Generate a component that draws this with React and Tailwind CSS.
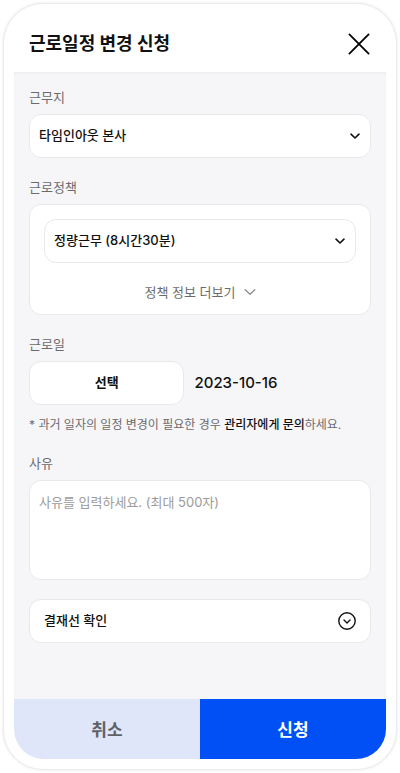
import { useState } from 'react'

const boxClass = 'rounded-xl border border-[#e9e9ec] bg-white'

function ChevronIcon({ className }) {
  return (
    <svg viewBox="0 0 12 12" fill="none" className={className} aria-hidden="true">
      <path
        d="M2 4.2 6 8l4-3.8"
        stroke="currentColor"
        strokeWidth="1.6"
        strokeLinecap="round"
        strokeLinejoin="round"
      />
    </svg>
  )
}

function Label({ htmlFor, children }) {
  return (
    <label
      htmlFor={htmlFor}
      className="mb-[7px] block text-[13px] leading-5 text-[#6b6b6e]"
    >
      {children}
    </label>
  )
}

function SelectBox({ id, options }) {
  return (
    <div className="relative">
      <select
        id={id}
        className={`h-11 w-full appearance-none pr-8 pl-[9px] text-[13px] font-medium text-[#111] outline-none ${boxClass}`}
      >
        {options.map((option) => (
          <option key={option}>{option}</option>
        ))}
      </select>
      <div className="pointer-events-none absolute inset-y-0 right-[10px] flex items-center">
        <ChevronIcon className="size-3" />
      </div>
    </div>
  )
}

function App() {
  const [reason, setReason] = useState('')

  return (
    <div className="flex min-h-screen bg-white p-[3px] font-['Inter','Noto_Sans_CJK_KR',sans-serif] text-[#111]">
      <form
        onSubmit={(e) => e.preventDefault()}
        className="flex flex-1 flex-col rounded-[40px] border border-[#ececec] bg-white px-[10px] pb-[10px] shadow-[0_0_3px_rgba(0,0,0,0.1)]"
      >
        {/* Header */}
        <header className="flex h-[68px] items-center justify-between px-[15px] pt-3">
          <h1 className="text-lg font-bold text-[#111]">근로일정 변경 신청</h1>
          <button type="button" aria-label="닫기" className="text-black">
            <svg viewBox="0 0 24 24" fill="none" className="size-6">
              <path
                d="M2.4 2.4l19.2 19.2M21.6 2.4 2.4 21.6"
                stroke="currentColor"
                strokeWidth="1.8"
                strokeLinecap="round"
              />
            </svg>
          </button>
        </header>

        {/* Fields */}
        <main className="flex flex-1 flex-col gap-[19px] bg-[#f6f6f8] px-[15px] pt-[15px] pb-10 shadow-[inset_0_2px_2px_rgba(0,0,0,0.03)]">
          <div>
            <Label htmlFor="place">근무지</Label>
            <SelectBox id="place" options={['타임인아웃 본사']} />
          </div>

          <div>
            <Label htmlFor="policy">근로정책</Label>
            <div className={`px-[14px] pt-[14px] pb-3 ${boxClass}`}>
              <SelectBox id="policy" options={['정량근무 (8시간30분)']} />
              <button
                type="button"
                className="mx-auto mt-[19px] flex items-center gap-2 text-[13px] leading-5 text-[#6b6b6e]"
              >
                정책 정보 더보기
                <svg viewBox="0 0 12 12" fill="none" className="size-3" aria-hidden="true">
                  <path
                    d="M1.2 3.7 6 8.3l4.8-4.6"
                    stroke="#8a8a8e"
                    strokeWidth="1.2"
                    strokeLinecap="round"
                    strokeLinejoin="round"
                  />
                </svg>
              </button>
            </div>
          </div>

          <div>
            <Label htmlFor="date">근로일</Label>
            <div className="flex items-center gap-[10px]">
              <button
                id="date"
                type="button"
                className={`h-11 w-5/11 text-[13px] font-bold ${boxClass}`}
              >
                선택
              </button>
              <span className="text-[15px] font-medium">2023-10-16</span>
            </div>
            <p className="mt-[11px] text-xs leading-[18px] text-[#6b6b6e]">
              * 과거 일자의 일정 변경이 필요한 경우{' '}
              <span className="font-medium text-[#111]">관리자에게 문의</span>
              하세요.
            </p>
          </div>

          <div>
            <Label htmlFor="reason">사유</Label>
            <textarea
              id="reason"
              maxLength={500}
              value={reason}
              onChange={(e) => setReason(e.target.value)}
              placeholder="사유를 입력하세요. (최대 500자)"
              className={`block h-[100px] w-full resize-none px-[9px] py-[11px] text-[13px] leading-5 outline-none placeholder:text-[#9b9b9b] ${boxClass}`}
            />
          </div>

          <button
            type="button"
            className={`flex h-11 items-center justify-between px-[14px] text-[13px] font-medium ${boxClass}`}
          >
            결재선 확인
            <svg viewBox="0 0 18 18" fill="none" className="size-[18px]" aria-hidden="true">
              <circle cx="9" cy="9" r="8.2" stroke="currentColor" strokeWidth="1.4" />
              <path
                d="M6 8l3 3 3-3"
                stroke="currentColor"
                strokeWidth="1.4"
                strokeLinecap="round"
                strokeLinejoin="round"
              />
            </svg>
          </button>
        </main>

        {/* Actions */}
        <footer className="flex h-[60px] overflow-hidden rounded-b-[30px] text-[17px] font-bold">
          <button type="button" className="flex-1 bg-[#e0e6fa] pt-1 text-[#5f6168]">
            취소
          </button>
          <button type="submit" className="flex-1 bg-[#0050f5] pt-1 text-white">
            신청
          </button>
        </footer>
      </form>
    </div>
  )
}

export default App
